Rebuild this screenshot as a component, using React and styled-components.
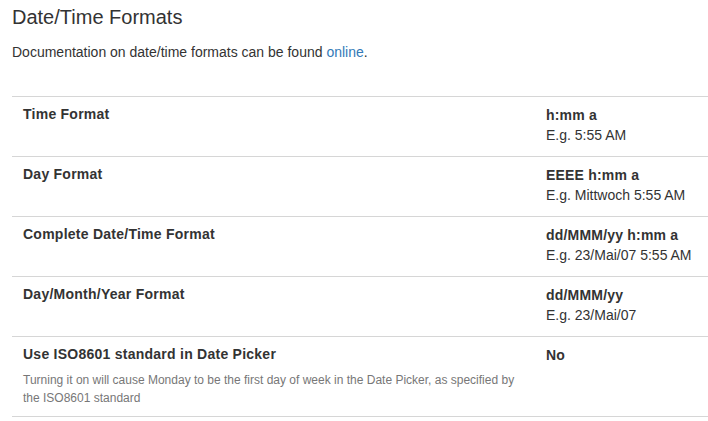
import React from "react";
import styled, { createGlobalStyle } from "styled-components";

const Global = createGlobalStyle`
  html, body { margin: 0; padding: 0; background: #fff; }
  body {
    font-family: "Liberation Sans", Arial, sans-serif;
    font-size: 14px;
    line-height: 20px;
    color: #333;
  }
`;

const Page = styled.div`
  padding: 0 0 0 12px;
`;

const Title = styled.h3`
  margin: 6px 0 0;
  font-size: 20px;
  line-height: 22px;
  font-weight: 400;
  color: #333;
`;

const Intro = styled.p`
  margin: 14px 0 0;
  font-size: 14px;
  line-height: 20px;
`;

const Link = styled.a`
  color: #337ab7;
  text-decoration: none;
`;

const Table = styled.div`
  margin-top: 34px;
  border-bottom: 1px solid #d6d6d6;
`;

const Row = styled.div`
  display: grid;
  grid-template-columns: 523px 1fr;
  border-top: 1px solid #d6d6d6;
  min-height: 59px;
`;

const Cell = styled.div`
  padding: 7px 11px 9px;
  display: flex;
  flex-direction: column;
`;

const Label = styled.div`
  font-weight: 700;
  font-size: 14px;
  line-height: 20px;
  letter-spacing: 0.25px;
`;

const Desc = styled.div`
  margin-top: 7px;
  font-size: 12px;
  line-height: 18px;
  color: #777;
`;

const Value = styled.div`
  font-weight: 700;
  font-size: 14px;
  line-height: 20px;
  letter-spacing: 0.2px;
  margin-top: 1px;
`;

const Example = styled.div`
  font-size: 14px;
  line-height: 20px;
`;

const rows = [
  { label: "Time Format", value: "h:mm a", example: "E.g. 5:55 AM" },
  { label: "Day Format", value: "EEEE h:mm a", example: "E.g. Mittwoch 5:55 AM" },
  { label: "Complete Date/Time Format", value: "dd/MMM/yy h:mm a", example: "E.g. 23/Mai/07 5:55 AM" },
  { label: "Day/Month/Year Format", value: "dd/MMM/yy", example: "E.g. 23/Mai/07" },
  {
    label: "Use ISO8601 standard in Date Picker",
    desc: "Turning it on will cause Monday to be the first day of week in the Date Picker, as specified by the ISO8601 standard",
    value: "No",
  },
];

export default function App() {
  return (
    <Page>
      <Global />
      <Title>Date/Time Formats</Title>
      <Intro>
        Documentation on date/time formats can be found <Link href="#">online</Link>.
      </Intro>
      <Table>
        {rows.map((r) => (
          <Row key={r.label}>
            <Cell>
              <Label>{r.label}</Label>
              {r.desc && <Desc>{r.desc}</Desc>}
            </Cell>
            <Cell>
              <Value>{r.value}</Value>
              {r.example && <Example>{r.example}</Example>}
            </Cell>
          </Row>
        ))}
      </Table>
    </Page>
  );
}
